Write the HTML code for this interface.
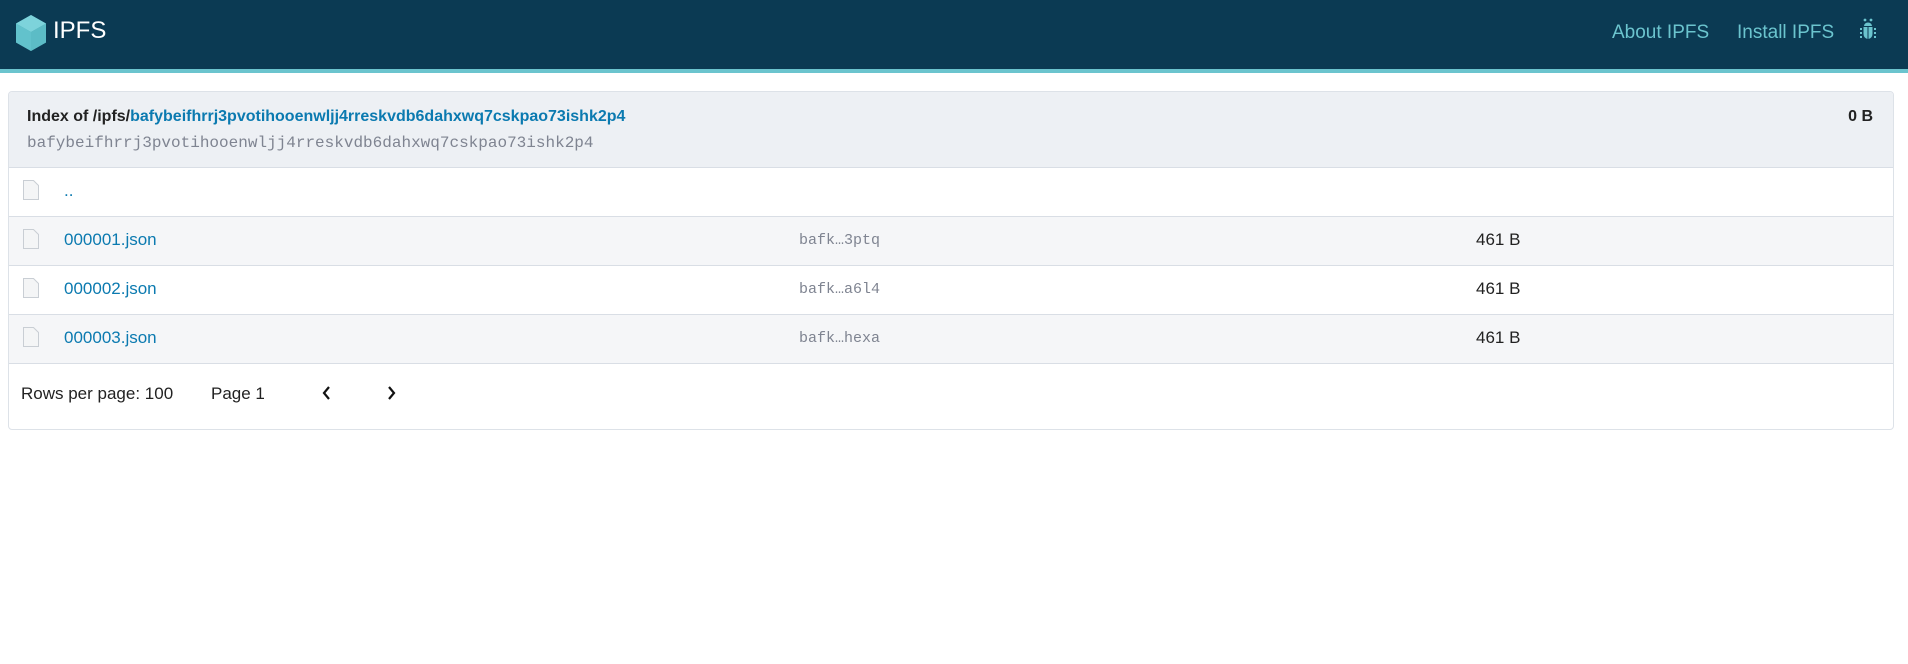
<!DOCTYPE html>
<html><head><meta charset="utf-8"><style>
*{box-sizing:border-box;margin:0;padding:0}
body{width:1908px;height:664px;background:#fff;font-family:"Liberation Sans",Arial,sans-serif;position:relative;overflow:hidden}
.hdr{position:absolute;left:0;top:0;width:1908px;height:69px;background:#0b3a53}
.band{position:absolute;left:0;top:69px;width:1908px;height:4px;background:#6bc4ce}
.t{position:absolute;white-space:nowrap}
.nav{color:#6bc4ce;font-size:19px;top:22px}
.card{position:absolute;left:8px;top:91px;width:1886px;height:339px;border:1px solid #dde2e8;border-radius:4px;overflow:hidden}
.ch{position:absolute;left:0;top:0;width:100%;height:76px;background:#edf0f4;border-bottom:1px solid #d9dee5}
.row{position:absolute;left:0;width:100%;height:49px;border-bottom:1px solid #d9dee5}
.link{color:#0b7ab0;font-size:17px}
.mono{font-family:"Liberation Mono",monospace;color:#7f8491}
.ic{position:absolute;left:14px;top:12px}
</style></head><body>
<div class="hdr"></div><div class="band"></div>
<svg class="t" style="left:15px;top:14px" width="32" height="38" viewBox="0 0 32 38">
<polygon points="16,1 31,9.5 31,28.5 16,37 1,28.5 1,9.5" fill="#4aa6b0"/>
<polygon points="16,1 31,9.5 16,18 1,9.5" fill="#7dd3db"/>
<polygon points="16,18 31,9.5 31,28.5 16,37" fill="#5cbcc6"/>
<polygon points="1,9.5 16,18 16,37 1,28.5" fill="#62c2cc"/>
</svg>
<div class="t" style="left:53px;top:17px;color:#fff;font-size:24px">IPFS</div>
<div class="t nav" style="left:1612px">About IPFS</div>
<div class="t nav" style="left:1737px">Install IPFS</div>
<svg class="t" style="left:1860px;top:18px" width="16" height="25" viewBox="0 0 16 25">
<g fill="#6bc4ce"><circle cx="5" cy="2" r="1.4"/><circle cx="11" cy="2" r="1.4"/>
<path d="M4 8a4 3.5 0 0 1 8 0z"/><path d="M3.5 9h9v7a4.5 5 0 0 1-9 0z"/>
<rect x="0" y="10" width="2" height="2"/><rect x="14" y="10" width="2" height="2"/>
<rect x="0" y="14" width="2" height="2"/><rect x="14" y="14" width="2" height="2"/>
<rect x="0" y="18" width="2" height="2"/><rect x="14" y="18" width="2" height="2"/></g>
<rect x="7.5" y="9" width="1" height="12" fill="#0b3a53"/></svg>

<div class="card">
<div class="ch">
<div class="t" style="left:18px;top:16px;font-size:16px;font-weight:bold;color:#222">Index of /ipfs/<span style="color:#0b7ab0">bafybeifhrrj3pvotihooenwljj4rreskvdb6dahxwq7cskpao73ishk2p4</span></div>
<div class="t mono" style="left:18px;top:42px;font-size:16px">bafybeifhrrj3pvotihooenwljj4rreskvdb6dahxwq7cskpao73ishk2p4</div>
<div class="t" style="right:20px;top:16px;font-size:16px;font-weight:bold;color:#222">0 B</div>
</div>
<div class="row" style="top:76px;background:#fff"><svg class="ic" width="16" height="20"><path d="M.5 .5h10l5 5v14H.5z" fill="#f4f5f6" stroke="#c9ced4"/></svg><div class="t link" style="left:55px;top:13px">..</div></div>
<div class="row" style="top:125px;background:#f5f6f8"><svg class="ic" width="16" height="20"><path d="M.5 .5h10l5 5v14H.5z" fill="#f4f5f6" stroke="#c9ced4"/></svg><div class="t link" style="left:55px;top:13px">000001.json</div><div class="t mono" style="left:790px;top:15px;font-size:15px">bafk…3ptq</div><div class="t" style="left:1467px;top:13px;font-size:17px;color:#222">461 B</div></div>
<div class="row" style="top:174px;background:#fff"><svg class="ic" width="16" height="20"><path d="M.5 .5h10l5 5v14H.5z" fill="#f4f5f6" stroke="#c9ced4"/></svg><div class="t link" style="left:55px;top:13px">000002.json</div><div class="t mono" style="left:790px;top:15px;font-size:15px">bafk…a6l4</div><div class="t" style="left:1467px;top:13px;font-size:17px;color:#222">461 B</div></div>
<div class="row" style="top:223px;background:#f5f6f8"><svg class="ic" width="16" height="20"><path d="M.5 .5h10l5 5v14H.5z" fill="#f4f5f6" stroke="#c9ced4"/></svg><div class="t link" style="left:55px;top:13px">000003.json</div><div class="t mono" style="left:790px;top:15px;font-size:15px">bafk…hexa</div><div class="t" style="left:1467px;top:13px;font-size:17px;color:#222">461 B</div></div>
<div class="t" style="left:12px;top:292px;font-size:17px;color:#222">Rows per page: 100</div>
<div class="t" style="left:202px;top:292px;font-size:17px;color:#222">Page 1</div>
<svg class="t" style="left:312px;top:293px" width="12" height="16"><path d="M8 2L3 8l5 6" fill="none" stroke="#111" stroke-width="2.2"/></svg>
<svg class="t" style="left:376px;top:293px" width="12" height="16"><path d="M4 2l5 6-5 6" fill="none" stroke="#111" stroke-width="2.2"/></svg>
</div>
</body></html>
